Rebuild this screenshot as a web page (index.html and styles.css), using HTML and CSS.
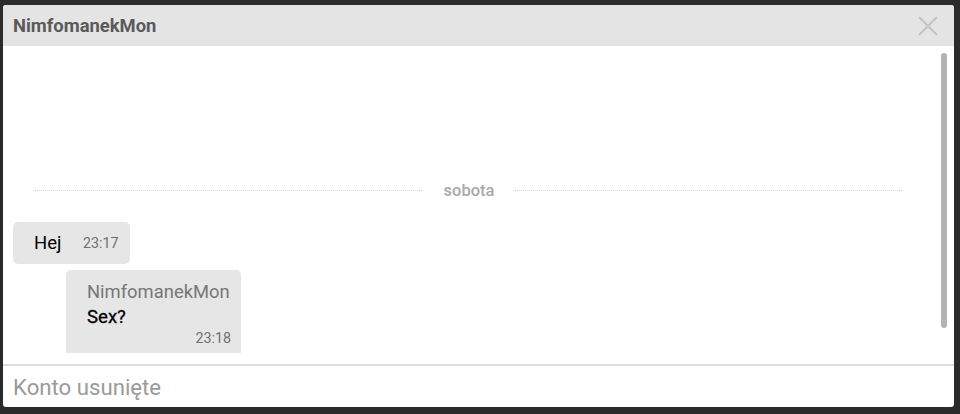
FILE: index.html
```html
<!DOCTYPE html>
<html lang="pl">
<head>
<meta charset="utf-8">
<title>Chat</title>
<link rel="stylesheet" href="styles.css">
</head>
<body>
<div class="dialog">
  <div class="header">
    <span class="title">NimfomanekMon</span>
    <svg class="close" width="20" height="20" viewBox="0 0 20 20"><path d="M1 1L19 19M19 1L1 19" stroke="#c4c4c4" stroke-width="2" fill="none"/></svg>
  </div>
  <div class="messages">
    <div class="sep"><span class="line"></span><span class="day">sobota</span><span class="line"></span></div>
    <div class="bubble mine"><span class="txt">Hej</span><span class="time">23:17</span></div>
    <div class="bubble theirs">
      <div class="author">NimfomanekMon</div>
      <div class="txt strong">Sex?</div>
      <div class="time right">23:18</div>
    </div>
    <div class="scrollbar"></div>
  </div>
  <div class="spacer"></div>
  <div class="input">Konto usunięte</div>
</div>
</body>
</html>
```
FILE: styles.css
```css
html, body { margin: 0; padding: 0; }
body {
  background: #2b2b2b;
  font-family: Roboto, "Noto Sans", Arial, sans-serif;
  height: 414px;
  overflow: hidden;
}
.dialog {
  margin: 5px 0 0 3px;
  width: 951px;
  height: 402px;
  background: #fff;
  border-radius: 3px;
  display: flex;
  flex-direction: column;
  overflow: hidden;
}
.header {
  height: 41px;
  flex: none;
  background: #e4e4e4;
  display: flex;
  align-items: center;
  justify-content: space-between;
  padding: 0 16px 0 10px;
}
.title {
  font-size: 18.4px;
  font-weight: 700;
  color: #5a5a5a;
}
.close { display: block; }
.messages {
  height: 307px;
  flex: none;
  position: relative;
  overflow: hidden;
  padding-top: 135px;
  box-sizing: border-box;
}
.sep {
  display: flex;
  align-items: center;
  margin: 0 52px 0 32px;
  height: 18px;
}
.line {
  flex: 1;
  border-top: 1px dotted #cfcfcf;
}
.day {
  font-size: 16.5px;
  font-weight: 500;
  color: #a9a9a9;
  padding: 0 21px 0 22px;
}
.bubble {
  background: #e6e6e6;
  border-radius: 5px;
  margin-left: 10px;
  box-sizing: border-box;
}
.mine {
  margin-top: 23px;
  width: 117px;
  height: 42px;
  display: flex;
  align-items: center;
  padding: 0 0 0 21px;
}
.mine .txt { font-size: 18.5px; color: #000; width: 49px; }
.time { font-size: 14.3px; color: #707070; }
.theirs {
  margin-top: 6px;
  margin-left: 63px;
  width: 175px;
  height: 100px;
  padding: 11px 10px 0 21px;
  border-radius: 5px 5px 0 0;
}
.author { font-size: 18.4px; color: #777; line-height: 22px; }
.strong { font-size: 18.6px; color: #000; font-weight: 400; line-height: 22px; margin-top: 3px; -webkit-text-stroke: 0.3px #000; }
.right { text-align: right; line-height: 18px; margin-top: 1px; }
.scrollbar {
  position: absolute;
  left: 938px;
  top: 7px;
  width: 6px;
  height: 275px;
  border-radius: 3px;
  background: #b3b3b3;
}
.spacer { height: 11px; flex: none; border-bottom: 2px solid #dcdcdc; }
.input {
  flex: 1;
  display: flex;
  align-items: center;
  padding-left: 10px;
  font-size: 22.2px;
  color: #9a9a9a;
}
```
